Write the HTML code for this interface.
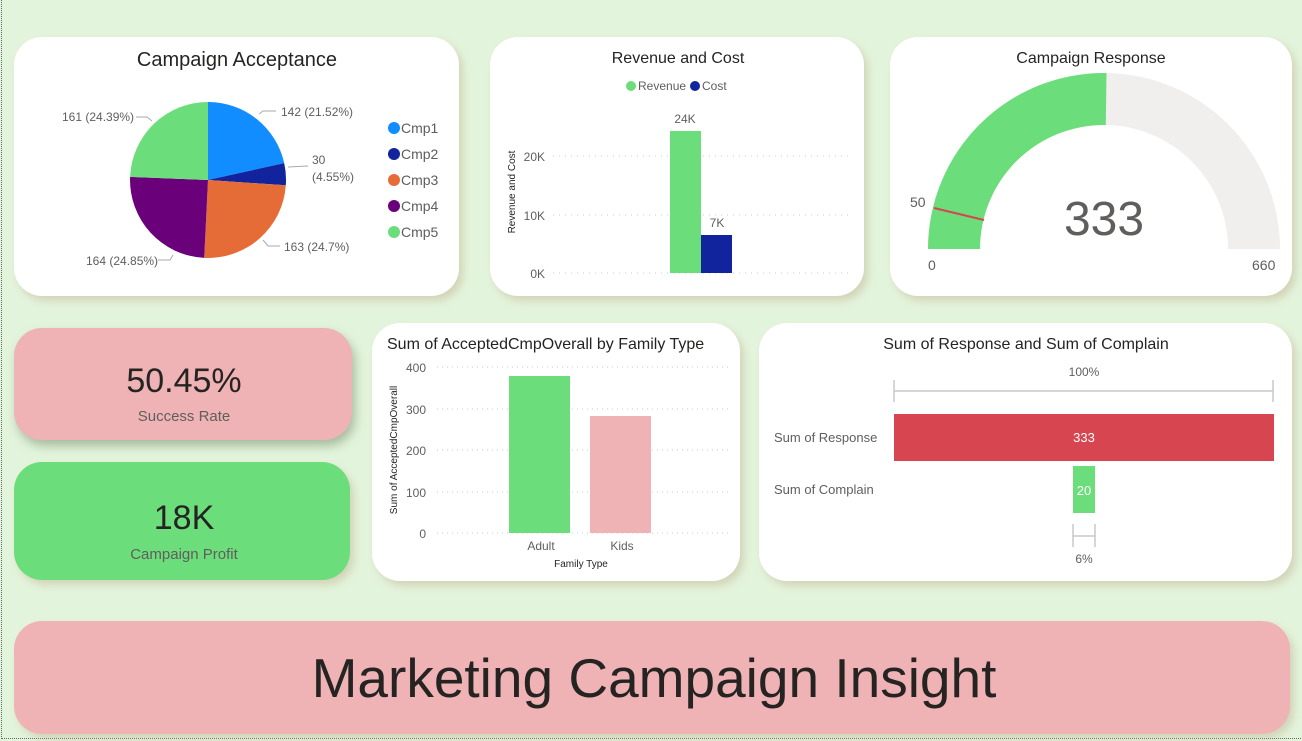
<!DOCTYPE html>
<html><head><meta charset="utf-8"><style>
*{margin:0;padding:0;box-sizing:border-box}
body{width:1302px;height:741px;background:#e3f4dc;position:relative;overflow:hidden;font-family:"Liberation Sans",sans-serif;color:#252423}
.frame{position:absolute;left:1px;top:-2px;width:1300px;height:741px;border-left:1px dotted #666;border-bottom:1px dotted #666}
.card{position:absolute;background:#fff;border-radius:28px;box-shadow:4px 5px 8px rgba(190,175,140,.45)}
svg{position:absolute;left:0;top:0}
</style></head><body>
<div class="frame"></div>
<div class="card" style="left:14px;top:37px;width:445px;height:259px"></div>
<div class="card" style="left:490px;top:37px;width:374px;height:259px"></div>
<div class="card" style="left:890px;top:37px;width:402px;height:259px"></div>
<div class="card" style="left:14px;top:328px;width:338px;height:112px;background:#efb3b6;box-shadow:3px 6px 10px rgba(120,140,110,.55)"></div>
<div class="card" style="left:14px;top:462px;width:336px;height:118px;background:#6bdd7b"></div>
<div class="card" style="left:372px;top:323px;width:368px;height:258px"></div>
<div class="card" style="left:759px;top:323px;width:533px;height:258px"></div>
<div class="card" style="left:14px;top:621px;width:1276px;height:113px;background:#efb3b6"></div>

<svg width="1302" height="741" font-family="Liberation Sans, sans-serif" fill="#252423">
<path d="M208 180 L208 102 A78 78 0 0 1 284.2 163.1Z" fill="#118dff"/>
<path d="M208 180 L284.2 163.1 A78 78 0 0 1 285.8 185.3Z" fill="#12239e"/>
<path d="M208 180 L285.8 185.3 A78 78 0 0 1 204.2 257.9Z" fill="#e66c37"/>
<path d="M208 180 L204.2 257.9 A78 78 0 0 1 130.1 176.9Z" fill="#6b007b"/>
<path d="M208 180 L130.1 176.9 A78 78 0 0 1 208 102Z" fill="#6bdd7b"/>
<g stroke="#aaa" fill="none" stroke-width="1">
<path d="M259 114 L263 111 L276 111"/><path d="M288 167 L308 166"/><path d="M263 240 L268 246 L280 246"/><path d="M173 255 L170 260 L158 260"/><path d="M152 121 L147 117 L136 117"/></g>
<g font-size="12" fill="#605e5c">
<text x="281" y="116">142 (21.52%)</text><text x="312" y="164">30</text><text x="312" y="181">(4.55%)</text>
<text x="284" y="251">163 (24.7%)</text><text x="86" y="265">164 (24.85%)</text><text x="62" y="121">161 (24.39%)</text></g>
<g font-size="14" fill="#605e5c">
<circle cx="394" cy="128" r="6" fill="#118dff"/><text x="401" y="133">Cmp1</text>
<circle cx="394" cy="154" r="6" fill="#12239e"/><text x="401" y="159">Cmp2</text>
<circle cx="394" cy="180" r="6" fill="#e66c37"/><text x="401" y="185">Cmp3</text>
<circle cx="394" cy="206" r="6" fill="#6b007b"/><text x="401" y="211">Cmp4</text>
<circle cx="394" cy="232" r="6" fill="#6bdd7b"/><text x="401" y="237">Cmp5</text></g>
<text x="237" y="66" font-size="20" text-anchor="middle">Campaign Acceptance</text>

<text x="678" y="63" font-size="16" text-anchor="middle">Revenue and Cost</text>
<circle cx="631" cy="86" r="5" fill="#6bdd7b"/><text x="638" y="90" font-size="12" fill="#605e5c">Revenue</text>
<circle cx="695" cy="86" r="5" fill="#12239e"/><text x="702" y="90" font-size="12" fill="#605e5c">Cost</text>
<g stroke="#c8c8c8" stroke-dasharray="1 5"><path d="M553 156H852M553 215H852M553 273H852"/></g>
<g font-size="12" fill="#605e5c" text-anchor="end"><text x="545" y="161">20K</text><text x="545" y="220">10K</text><text x="545" y="278">0K</text></g>
<text transform="translate(515 192) rotate(-90)" font-size="10" text-anchor="middle">Revenue and Cost</text>
<rect x="670" y="131" width="31" height="142" fill="#6bdd7b"/>
<rect x="701" y="235" width="31" height="38" fill="#12239e"/>
<g font-size="12" fill="#605e5c" text-anchor="middle"><text x="685" y="123">24K</text><text x="717" y="227">7K</text></g>

<text x="1091" y="63" font-size="16" text-anchor="middle">Campaign Response</text>
<path d="M928 249 A176 176 0 0 1 1280 249 L1228 249 A124 124 0 0 0 980 249Z" fill="#f1efed"/>
<path d="M928 249 A176 176 0 0 1 1106.5 73 L1105.8 125 A124 124 0 0 0 980 249Z" fill="#6bdd7b"/>
<path d="M934 208 L984 220" stroke="#d64550" stroke-width="2"/>
<text x="1104" y="235" font-size="48" text-anchor="middle" fill="#605e5c">333</text>
<g font-size="14" fill="#605e5c"><text x="910" y="207">50</text><text x="928" y="270">0</text><text x="1252" y="270">660</text></g>

<text x="387" y="349" font-size="16">Sum of AcceptedCmpOverall by Family Type</text>
<g stroke="#c8c8c8" stroke-dasharray="1 4"><path d="M437 367H728M437 409H728M437 450H728M437 492H728M437 533H728"/></g>
<g font-size="12" fill="#605e5c" text-anchor="end"><text x="426" y="372">400</text><text x="426" y="414">300</text><text x="426" y="455">200</text><text x="426" y="497">100</text><text x="426" y="538">0</text></g>
<text transform="translate(397 450) rotate(-90)" font-size="10" text-anchor="middle">Sum of AcceptedCmpOverall</text>
<rect x="509" y="376" width="61" height="157" fill="#6bdd7b"/>
<rect x="590" y="416" width="61" height="117" fill="#efb3b6"/>
<g font-size="12" fill="#605e5c" text-anchor="middle"><text x="541" y="550">Adult</text><text x="622" y="550">Kids</text></g>
<text x="581" y="567" font-size="10" text-anchor="middle">Family Type</text>

<text x="1026" y="349" font-size="16" text-anchor="middle">Sum of Response and Sum of Complain</text>
<text x="1084" y="376" font-size="12" fill="#605e5c" text-anchor="middle">100%</text>
<g stroke="#c8c8c8" stroke-width="1.5" fill="none"><path d="M894 380V402M1273 380V402M894 391H1273"/><path d="M1073 524V547M1095 524V547M1073 536H1095"/></g>
<rect x="894" y="414" width="380" height="47" fill="#d64550"/>
<rect x="1073" y="466" width="22" height="47" fill="#6bdd7b"/>
<text x="1084" y="442" font-size="13" fill="#fff" text-anchor="middle">333</text>
<text x="1084" y="495" font-size="13" fill="#fff" text-anchor="middle">20</text>
<g font-size="13" fill="#605e5c"><text x="774" y="442">Sum of Response</text><text x="774" y="494">Sum of Complain</text></g>
<text x="1084" y="563" font-size="12" fill="#605e5c" text-anchor="middle">6%</text>

<text x="184" y="392" font-size="34" text-anchor="middle">50.45%</text>
<text x="184" y="421" font-size="15" fill="#605e5c" text-anchor="middle">Success Rate</text>
<text x="184" y="529" font-size="34" text-anchor="middle">18K</text>
<text x="184" y="559" font-size="15" fill="#605e5c" text-anchor="middle">Campaign Profit</text>
<text x="654" y="697" font-size="55" text-anchor="middle">Marketing Campaign Insight</text>
</svg>
</body></html>
